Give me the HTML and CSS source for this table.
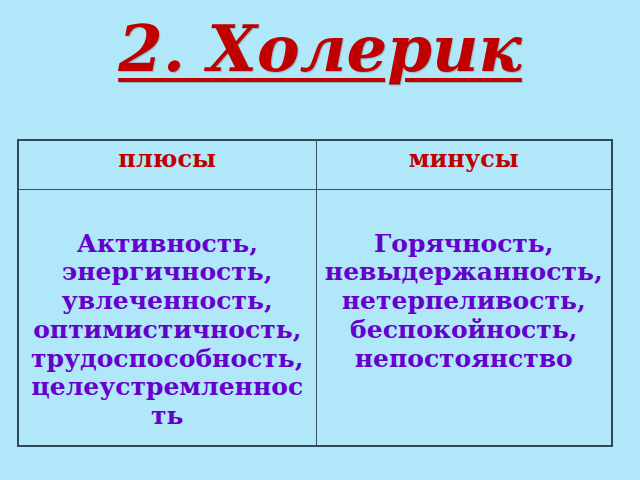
FILE: index.html
```html
<!DOCTYPE html>
<html lang="ru">
<head>
<meta charset="utf-8">
<link rel="stylesheet" href="styles.css">
</head>
<body>
<div class="slide">
  <h1 class="title">2. Холерик</h1>
  <table class="grid">
    <tr class="head">
      <th>плюсы</th>
      <th>минусы</th>
    </tr>
    <tr class="body">
      <td>Активность,<br>энергичность,<br>увлеченность,<br>оптимистичность,<br>трудоспособность,<br>целеустремленнос<br>ть</td>
      <td>Горячность,<br>невыдержанность,<br>нетерпеливость,<br>беспокойность,<br>непостоянство</td>
    </tr>
  </table>
</div>
</body>
</html>
```
FILE: styles.css
```css
html, body {
  margin: 0;
  padding: 0;
  background: #b0e8f9;
}
.slide {
  width: 640px;
  height: 480px;
  overflow: hidden;
  display: flex;
  flex-direction: column;
  align-items: center;
  font-family: "DejaVu Serif", serif;
}
.title {
  margin: 11px 0 0 0;
  font-size: 64px;
  font-weight: bold;
  font-style: italic;
  line-height: 76px;
  color: #c00000;
  text-decoration: underline;
  text-decoration-thickness: 4px;
  text-underline-offset: 7px;
  text-shadow: 1px 1px 1px rgba(0,0,0,0.2);
}
.grid {
  margin-top: 52px;
  align-self: flex-start;
  margin-left: 17px;
  width: 596px;
  border-collapse: collapse;
  border: 2px solid #2e4a55;
  table-layout: fixed;
}
.grid th, .grid td {
  border: 1px solid #34505a;
  text-align: center;
  font-weight: bold;
  padding: 0;
}
.grid th:first-child, .grid td:first-child {
  width: 298px;
}
.head th {
  height: 49px;
  vertical-align: top;
  color: #c00000;
  font-size: 24px;
  line-height: 28px;
  padding-top: 4px;
  box-sizing: border-box;
}
.body td {
  height: 257px;
  vertical-align: top;
  color: #6600cc;
  font-size: 25px;
  line-height: 28.8px;
  padding-top: 40px;
  box-sizing: border-box;
  white-space: nowrap;
}
```
